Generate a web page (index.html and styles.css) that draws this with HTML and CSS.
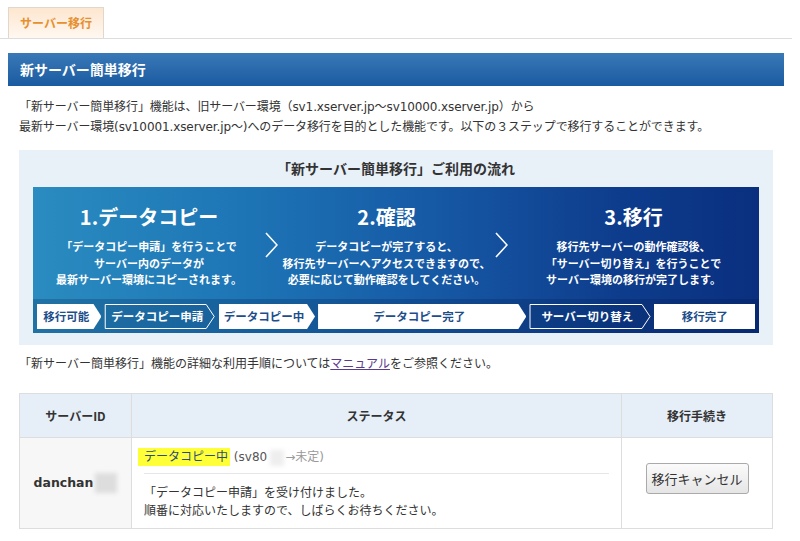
FILE: index.html
```html
<!DOCTYPE html>
<html lang="ja">
<head>
    <meta charset="UTF-8">
    <title>サーバー移行</title>
    <link rel="stylesheet" href="styles.css">
</head>
<body>
    <div class="tabs">
        <div class="tab">サーバー移行</div>
    </div>

    <div class="page">
        <h2 class="section-title">新サーバー簡単移行</h2>

        <div class="content">
            <p class="lead">「新サーバー簡単移行」機能は、旧サーバー環境（sv1.xserver.jp～sv10000.xserver.jp）から<br>最新サーバー環境(sv10001.xserver.jp～)へのデータ移行を目的とした機能です。以下の３ステップで移行することができます。</p>

            <div class="flow">
                <h3 class="flow-title">「新サーバー簡単移行」ご利用の流れ</h3>
                <div class="flow-chart">
                    <div class="steps">
                        <div class="step">
                            <div class="step-name">1.データコピー</div>
                            <p>「データコピー申請」を行うことで<br>サーバー内のデータが<br>最新サーバー環境にコピーされます。</p>
                        </div>
                        <svg class="chevron" viewBox="0 0 13 26"><polyline points="1,1 12,13 1,25" fill="none" stroke="#fff" stroke-width="1.6"/></svg>
                        <div class="step">
                            <div class="step-name">2.確認</div>
                            <p>データコピーが完了すると、<br>移行先サーバーへアクセスできますので、<br>必要に応じて動作確認をしてください。</p>
                        </div>
                        <svg class="chevron" viewBox="0 0 13 26"><polyline points="1,1 12,13 1,25" fill="none" stroke="#fff" stroke-width="1.6"/></svg>
                        <div class="step">
                            <div class="step-name">3.移行</div>
                            <p>移行先サーバーの動作確認後、<br>「サーバー切り替え」を行うことで<br>サーバー環境の移行が完了します。</p>
                        </div>
                    </div>
                    <div class="states">
                        <span class="state available">移行可能</span>
                        <span class="state outline request">
                            <svg class="state-line" viewBox="0 0 110 25"><polygon points="0.5,0.5 101.5,0.5 109.5,12.5 101.5,24.5 0.5,24.5" fill="none" stroke="#fff"/></svg>
                            データコピー申請
                        </span>
                        <span class="state copying">データコピー中</span>
                        <span class="state copied">データコピー完了</span>
                        <span class="state outline switch">
                            <svg class="state-line" viewBox="0 0 121 25"><polygon points="0.5,0.5 112.5,0.5 120.5,12.5 112.5,24.5 0.5,24.5" fill="none" stroke="#fff"/></svg>
                            サーバー切り替え
                        </span>
                        <span class="state done">移行完了</span>
                    </div>
                </div>
            </div>

            <p class="note">「新サーバー簡単移行」機能の詳細な利用手順については<a href="#">マニュアル</a>をご参照ください。</p>

            <table class="status-table">
                <colgroup>
                    <col class="col-id">
                    <col class="col-status">
                    <col class="col-action">
                </colgroup>
                <thead>
                    <tr>
                        <th>サーバーID</th>
                        <th>ステータス</th>
                        <th>移行手続き</th>
                    </tr>
                </thead>
                <tbody>
                    <tr>
                        <td class="server-id">danchan<span class="blur"></span></td>
                        <td class="status">
                            <div class="status-line"><span class="mark">データコピー中</span> <span class="target">(sv80<span class="blur small"></span><span class="pending">→未定)</span></span></div>
                            <div class="status-msg">「データコピー申請」を受け付けました。<br>順番に対応いたしますので、しばらくお待ちください。</div>
                        </td>
                        <td class="action"><button class="cancel-button">移行キャンセル</button></td>
                    </tr>
                </tbody>
            </table>
        </div>
    </div>
</body>
</html>
```

FILE: styles.css
```css
body {
    margin: 0;
    font-family: "DejaVu Sans", "Noto Sans CJK JP", sans-serif;
    font-size: 12px;
    color: #333;
    background: #fff;
}
.tabs {
    width: 792px;
    padding: 7px 0 0 8px;
    box-sizing: border-box;
    border-bottom: 1px solid #ddd;
    display: flex;
}
.tab {
    height: 30px;
    line-height: 30px;
    padding: 0 11px;
    border: 1px solid #e0d8cf;
    border-bottom: none;
    background: linear-gradient(#fde6cf, #fff8f1);
    color: #e7902f;
    font-weight: bold;
    font-size: 12px;
    font-family: "Noto Sans CJK JP", sans-serif;
}
.page {
    width: 776px;
    margin: 14px 0 0 8px;
}
.section-title {
    margin: 0;
    height: 33px;
    line-height: 33px;
    padding-left: 12px;
    background: linear-gradient(#3a79b7, #1a5aa0);
    color: #fff;
    font-size: 14px;
    font-family: "Noto Sans CJK JP", sans-serif;
}
.content {
    padding: 0 11px;
}
.lead {
    margin: 11px 0 0;
    line-height: 20px;
    letter-spacing: -0.1px;
}
.flow {
    margin-top: 13px;
    padding: 8px 14px 12px;
    background: #e8f0f8;
}
.flow-title {
    margin: 0 0 9px;
    text-align: center;
    font-size: 14px;
    line-height: 20px;
    color: #333;
    font-family: "Noto Sans CJK JP", sans-serif;
}
.flow-chart {
    height: 146px;
    background: linear-gradient(90deg, #2a8cc0 0%, #1d74b5 30%, #1659a5 55%, #0e3d8d 80%, #0a2f7f 100%);
    color: #fff;
    font-family: "Noto Sans CJK JP", sans-serif;
    font-weight: bold;
}
.steps {
    height: 112px;
    display: grid;
    grid-template-columns: 232px 13px 1fr 13px 251px;
}
.step {
    text-align: center;
    padding-top: 18px;
}
.step-name {
    font-size: 20px;
    line-height: 24px;
}
.step p {
    margin: 9px 0 0;
    font-size: 11px;
    line-height: 16.5px;
    white-space: nowrap;
}
.chevron {
    width: 13px;
    height: 26px;
    margin-top: 45px;
}
.states {
    height: 34px;
    box-sizing: border-box;
    padding: 5px 4px 4px;
    display: flex;
    gap: 3px;
    background: rgba(0, 25, 70, 0.22);
}
.state {
    position: relative;
    height: 25px;
    line-height: 25px;
    font-size: 11.5px;
    text-align: center;
    padding-right: 6px;
    color: #1d4e8a;
    background: #fff;
    clip-path: polygon(0 0, calc(100% - 8px) 0, 100% 50%, calc(100% - 8px) 100%, 0 100%);
}
.state.outline {
    color: #fff;
    background: none;
    clip-path: none;
}
.state-line {
    position: absolute;
    left: 0;
    top: 0;
    width: 100%;
    height: 100%;
}
.available { width: 61px; }
.request { width: 110px; }
.copying { width: 94px; }
.copied { width: 211px; }
.switch { width: 121px; }
.done {
    width: 105px;
    clip-path: none;
    padding-right: 0;
}
.note {
    margin: 9px 0 0;
    line-height: 20px;
}
.note a {
    color: #5b3a8e;
}
.status-table {
    margin-top: 19px;
    width: 754px;
    border-collapse: collapse;
    table-layout: fixed;
}
.col-id { width: 112px; }
.col-action { width: 151px; }
.status-table th,
.status-table td {
    border: 1px solid #ddd;
}
.status-table th {
    height: 43px;
    padding: 0;
    background: #e6eff8;
    font-size: 12px;
    font-family: "Noto Sans CJK JP", sans-serif;
    color: #333;
}
.server-id {
    background: #f7f7f7;
    text-align: center;
    font-weight: bold;
    font-size: 12.5px;
    color: #333;
}
.blur {
    display: inline-block;
    width: 22px;
    height: 20px;
    margin-left: 2px;
    vertical-align: middle;
    background: #ddd;
    filter: blur(2px);
}
.blur.small {
    width: 14px;
    height: 16px;
    margin: 0 1px 0 3px;
    background: #eee;
}
.status {
    padding: 8px 12px 8px;
    vertical-align: top;
}
.status-line {
    line-height: 22px;
    padding-bottom: 5px;
    border-bottom: 1px solid #e6e6e6;
}
.mark {
    margin-left: -6px;
    padding: 2px 2px 2px 6px;
    background: #ffff38;
    color: #2b4c7c;
}
.target {
    color: #555;
}
.pending {
    color: #999;
}
.status-msg {
    margin-top: 10px;
    line-height: 18px;
}
.action {
    text-align: center;
}
.cancel-button {
    width: 103px;
    height: 31px;
    margin-bottom: 10px;
    padding: 0;
    border: 1px solid #aaa;
    border-radius: 3px;
    background: linear-gradient(#fbfbfb, #e5e5e5);
    font-family: "Noto Sans CJK JP", sans-serif;
    font-size: 13px;
    color: #333;
}
```
